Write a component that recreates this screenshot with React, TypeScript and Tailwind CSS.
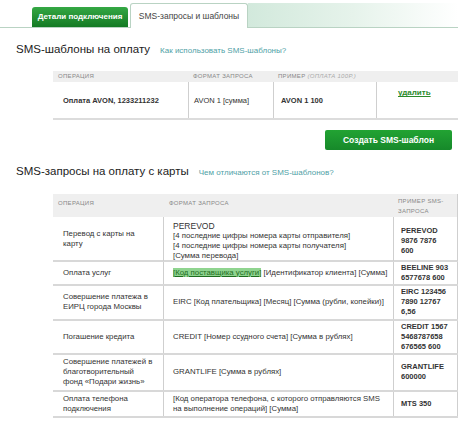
import React from "react";

const font = { fontFamily: '"Liberation Sans", Arial, sans-serif' };

function Tabs() {
  return (
    <div className="flex items-end pt-[3px] pl-[10px] w-[458px] border-b border-[#b9d3c3] h-[28px]">
      <div className="w-[22px]" />
      <div className="h-[20px] w-[96px] rounded-t-[3px] bg-gradient-to-b from-[#34a844] to-[#137a23] flex items-center justify-center text-white text-[8px] font-bold">
        Детали подключения
      </div>
      <div className="w-[2px]" />
      <div className="h-[25px] w-[118px] rounded-t-[3px] border border-b-0 border-[#b9d3c3] bg-white flex items-center justify-center text-[#444] text-[8.5px] -mb-px relative z-10">
        SMS-запросы и шаблоны
      </div>
      <div className="flex-1 h-[24px] bg-gradient-to-r from-[#d2e9dc] via-[#e6f3eb] to-white" />
    </div>
  );
}

function Table1() {
  return (
    <div className="ml-[53px] w-[405px] mt-[13px]">
      <div className="grid grid-cols-[135px_85px_103px_82px] h-[11px] bg-[#efefef] text-[6px] tracking-[0.3px] text-[#888] items-center">
        <div className="pl-[5px]">ОПЕРАЦИЯ</div>
        <div className="pl-[5px]">ФОРМАТ ЗАПРОСА</div>
        <div className="pl-[5px]">
          ПРИМЕР <span className="italic text-[#aaa]">(ОПЛАТА 100Р.)</span>
        </div>
        <div />
      </div>
      <div className="grid grid-cols-[135px_85px_103px_82px] h-[38px] border-b-2 border-[#dcdcdc] text-[7.5px] text-[#333]">
        <div className="flex items-center pl-[10px] font-semibold">Оплата AVON, 1233211232</div>
        <div className="flex items-center pl-[5px] border-l border-[#cfcfcf]">AVON 1 [сумма]</div>
        <div className="flex items-center pl-[7px] border-l border-[#cfcfcf] font-bold">AVON 1 100</div>
        <div className="border-l border-[#cfcfcf] pl-[21px] pt-[5px]">
          <span className="text-[#2b8a2b] font-bold underline text-[8px]">удалить</span>
        </div>
      </div>
    </div>
  );
}

type Row = { h: number; op: React.ReactNode; fmt: React.ReactNode; ex: React.ReactNode };

const rows: Row[] = [
  {
    h: 45,
    op: <>Перевод с карты на<br />карту</>,
    fmt: (
      <div className="leading-[10px] pt-[4px]">
        <div className="text-[8.5px]">PEREVOD</div>
        <div>[4 последние цифры номера карты отправителя]</div>
        <div>[4 последние цифры номера карты получателя]</div>
        <div>[Сумма перевода]</div>
      </div>
    ),
    ex: <div className="pt-[4px]">PEREVOD<br />9876 7876<br />600</div>,
  },
  {
    h: 24,
    op: <>Оплата услуг</>,
    fmt: (
      <div className="whitespace-nowrap">
        <span className="bg-[#8fd48f] text-[#1f6e1f] underline">[Код поставщика услуги]</span> [Идентификатор клиента] [Сумма]
      </div>
    ),
    ex: <div>BEELINE 903<br />6577678 600</div>,
  },
  {
    h: 35,
    op: <>Совершение платежа в<br />ЕИРЦ города Москвы</>,
    fmt: <div>EIRC [Код плательщика] [Месяц] [Сумма (рубли, копейки)]</div>,
    ex: <div>EIRC 123456<br />7890 12767<br />6,56</div>,
  },
  {
    h: 34,
    op: <>Погашение кредита</>,
    fmt: <div>CREDIT [Номер ссудного счета] [Сумма в рублях]</div>,
    ex: <div>CREDIT 1567<br />5468787658<br />676565 600</div>,
  },
  {
    h: 37,
    op: <>Совершение платежей в<br />благотворительный<br />фонд «Подари жизнь»</>,
    fmt: <div>GRANTLIFE [Сумма в рублях]</div>,
    ex: <div>GRANTLIFE<br />600000</div>,
  },
  {
    h: 26,
    op: <>Оплата телефона<br />подключения</>,
    fmt: (
      <div className="whitespace-nowrap">
        [Код оператора телефона, с которого отправляются SMS
        <br />
        на выполнение операций] [Сумма]
      </div>
    ),
    ex: <div>MTS 350</div>,
  },
];

function Table2() {
  return (
    <div className="ml-[53px] w-[405px] mt-[13px]">
      <div className="grid grid-cols-[110px_230px_65px] h-[23px] bg-[#efefef] text-[6px] tracking-[0.3px] text-[#888]">
        <div className="pl-[5px] pt-[5px]">ОПЕРАЦИЯ</div>
        <div className="pl-[6px] pt-[5px]">ФОРМАТ ЗАПРОСА</div>
        <div className="pl-[5px] pt-[2px] leading-[10px] border-r border-[#cfcfcf]">
          ПРИМЕР SMS-
          <br />
          ЗАПРОСА
        </div>
      </div>
      {rows.map((r, i) => (
        <div
          key={i}
          className="grid grid-cols-[110px_230px_65px] border-b-2 border-[#d8d8d8] text-[7.8px] leading-[10px] text-[#333]"
          style={{ height: r.h }}
        >
          <div className="flex items-center pl-[10px]">
            <div>{r.op}</div>
          </div>
          <div className="flex items-center pl-[9px] border-l border-[#cfcfcf]">{r.fmt}</div>
          <div className="flex items-center pl-[7px] border-l border-r border-[#cfcfcf] font-bold text-[7.5px] leading-[10px]">
            {r.ex}
          </div>
        </div>
      ))}
    </div>
  );
}

export default function App() {
  return (
    <div className="w-[474px] h-[421px] bg-white overflow-hidden" style={font}>
      <Tabs />
      <div className="flex items-baseline pl-[16px] mt-[13px]">
        <span className="text-[11.5px] text-[#222]">SMS-шаблоны на оплату</span>
        <span className="ml-[10px] text-[8px] text-[#4f9fa6]">Как использовать SMS-шаблоны?</span>
      </div>
      <Table1 />
      <div className="flex justify-end w-[452px] mt-[10px]">
        <div className="w-[127px] h-[20px] rounded-[2px] bg-gradient-to-b from-[#22a333] to-[#16892a] text-white font-bold text-[8.5px] flex items-center justify-center">
          Создать SMS-шаблон
        </div>
      </div>
      <div className="flex items-baseline pl-[16px] mt-[13px]">
        <span className="text-[11.5px] text-[#222]">SMS-запросы на оплату с карты</span>
        <span className="ml-[10px] text-[8px] text-[#4f9fa6]">Чем отличаются от SMS-шаблонов?</span>
      </div>
      <Table2 />
    </div>
  );
}
